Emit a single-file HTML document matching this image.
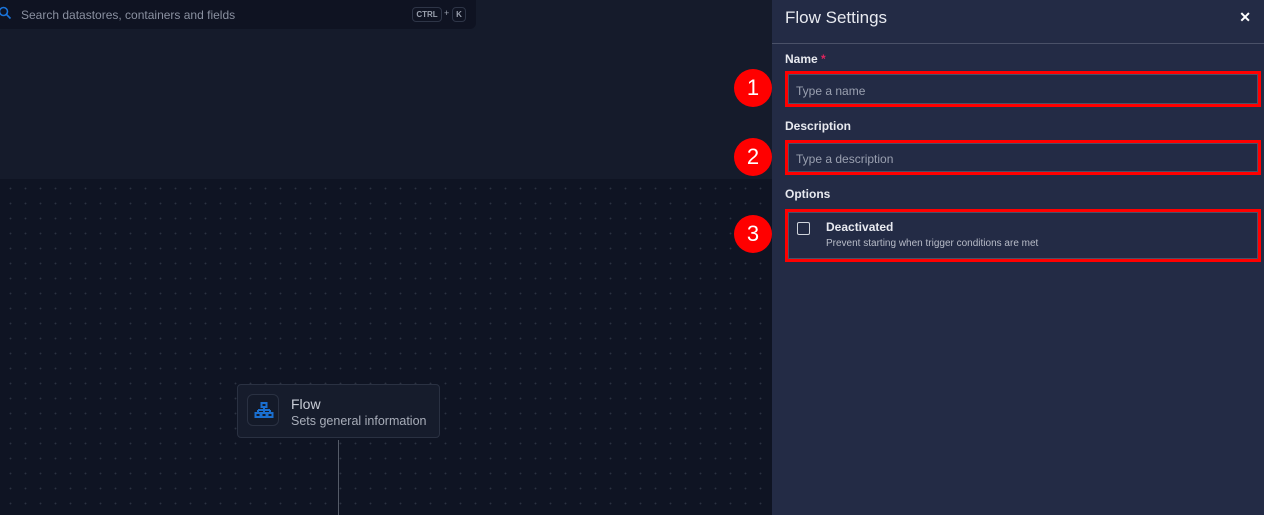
<!DOCTYPE html>
<html><head><style>
*{margin:0;padding:0;box-sizing:border-box}
body{width:1264px;height:515px;overflow:hidden;background:#0f1423;font-family:"Liberation Sans",sans-serif;position:relative}
.top{position:absolute;left:0;top:0;width:772px;height:179px;background:#151b2b}
.search{position:absolute;left:0;top:0;width:476px;height:29px;background:#0f1322;border-radius:0 0 6px 0}
.search .t{position:absolute;left:21px;top:8px;font-size:12px;color:#8a90a0}
.kbd{position:absolute;top:7px;height:15px;border:1px solid #2e3547;border-radius:4px;font-size:8px;font-weight:bold;color:#9aa0ae;line-height:13px;text-align:center}
.grid{position:absolute;left:0;top:179px;width:772px;height:336px;background-color:#0f1423;background-image:radial-gradient(circle,#2c3242 0.7px,transparent 1.1px);background-size:15px 15px;background-position:3px 2px}
.node{position:absolute;left:237px;top:384px;width:203px;height:54px;background:#161c2c;border:1px solid #2a3142;border-radius:4px}
.ic{position:absolute;left:9px;top:9px;width:32px;height:32px;border:1px solid #2a3142;border-radius:6px;background:#141a29}
.line{position:absolute;left:338px;top:440px;width:1px;height:75px;background:#555b68}
.panel{position:absolute;left:772px;top:0;width:492px;height:515px;background:#232b45}
.title{position:absolute;left:13px;top:8px;font-size:17px;color:#e8eaf0}
.x{position:absolute;right:13px;top:9px;color:#fff;font-size:14px;font-weight:bold}
.hr{position:absolute;left:0;top:43px;width:492px;height:1px;background:#4a5168}
.lbl{position:absolute;left:13px;font-size:12px;font-weight:bold;color:#e8eaf0}
.inp{position:absolute;left:13px;width:476px;border:3px solid #ff0000;background:#232b45}
.inp:before{content:"";position:absolute;left:0;top:0;right:0;bottom:0;border:1px solid #4a5168}
.inp span{position:absolute;left:8px;font-size:12px;color:#9aa0b0}
.badge{position:absolute;left:734px;width:38px;height:38px;border-radius:50%;background:#ff0000;color:#fff;font-size:22px;text-align:center;line-height:38px}
</style></head><body>
<div class="top"></div>
<div class="search">
<svg style="position:absolute;left:-2px;top:6px" width="14" height="14" viewBox="0 0 14 14"><circle cx="5.5" cy="5.5" r="4" fill="none" stroke="#1a73d9" stroke-width="1.6"/><line x1="8.5" y1="8.5" x2="12.5" y2="12.5" stroke="#1a73d9" stroke-width="1.6"/></svg>
<span class="t">Search datastores, containers and fields</span>
<span class="kbd" style="left:412px;width:30px">CTRL</span><span style="position:absolute;left:444px;top:8px;font-size:9px;color:#9aa0ae">+</span><span class="kbd" style="left:452px;width:14px">K</span>
</div>
<div class="grid"></div>
<div class="node"><div class="ic"><svg width="32" height="32" viewBox="0 0 32 32" fill="none" stroke="#1a6fd0" stroke-width="2"><rect x="13.5" y="8" width="5" height="4"/><path d="M16 12v3M10 15h12M10 15v3M16 15v3M22 15v3"/><rect x="7.5" y="18" width="5" height="4"/><rect x="13.5" y="18" width="5" height="4"/><rect x="19.5" y="18" width="5" height="4"/></svg></div>
<div style="position:absolute;left:53px;top:11px;font-size:14px;color:#c8ccd6">Flow</div>
<div style="position:absolute;left:53px;top:29px;font-size:12.5px;color:#a8adb9">Sets general information</div></div>
<div class="line"></div>
<div class="panel">
<div class="title">Flow Settings</div><div class="x">✕</div>
<div class="hr"></div>
<div class="lbl" style="top:52px">Name <span style="color:#e0245e">*</span></div>
<div class="inp" style="top:71px;height:36px"><span style="top:10px">Type a name</span></div>
<div class="lbl" style="top:119px">Description</div>
<div class="inp" style="top:140px;height:35px"><span style="top:9px">Type a description</span></div>
<div class="lbl" style="top:187px">Options</div>
<div class="inp" style="top:209px;height:53px">
<div style="position:absolute;left:9px;top:10px;width:13px;height:13px;border:1px solid #d0d4dc;border-radius:2px"></div>
<div style="position:absolute;left:38px;top:8px;font-size:12px;font-weight:bold;color:#e8eaf0">Deactivated</div>
<div style="position:absolute;left:38px;top:26px;font-size:10px;color:#b8bcc8">Prevent starting when trigger conditions are met</div>
</div>
</div>
<div class="badge" style="top:69px">1</div>
<div class="badge" style="top:138px">2</div>
<div class="badge" style="top:215px">3</div>
</body></html>
